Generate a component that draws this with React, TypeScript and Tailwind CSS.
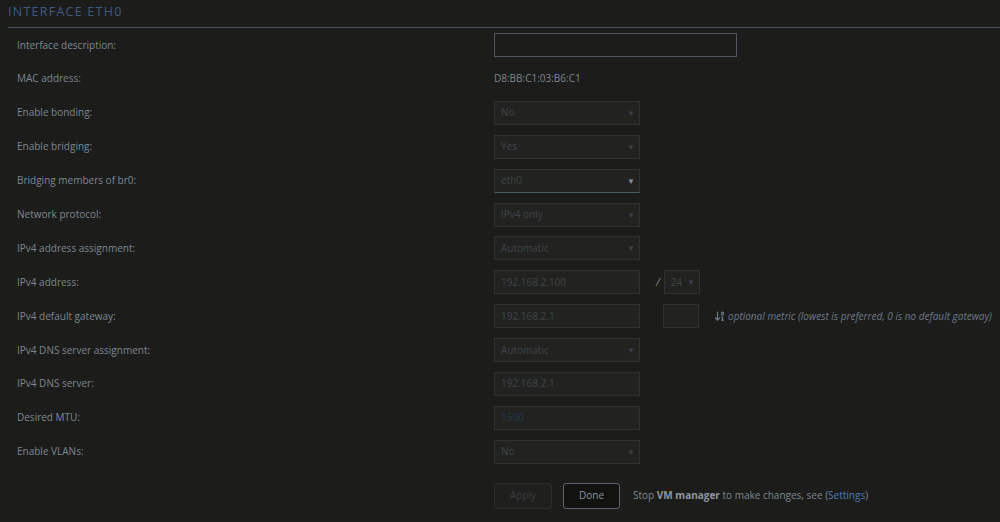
import { ArrowDown01 } from 'lucide-react';

const font = { fontFamily: '"Open Sans", "Noto Sans", sans-serif' };

function Caret({ bright = false }: { bright?: boolean }) {
  return (
    <span className={`text-[8px] leading-none ${bright ? 'text-[#8a929c]' : 'text-[#3c4046]'}`}>▼</span>
  );
}

function Select({ value, bright = false, w = 'w-[146px]' }: { value: string; bright?: boolean; w?: string }) {
  return (
    <div
      className={`${w} h-[24px] flex items-center justify-between pl-[6px] pr-[4px] bg-[#222321] border border-[#30322f] ${
        bright ? 'border-b-[#4a5868]' : ''
      }`}
    >
      <span className="text-[10px] text-[#3f4347]">{value}</span>
      <Caret bright={bright} />
    </div>
  );
}

function TextBox({ value = '', color = 'text-[#3f4347]', w = 'w-[146px]' }: { value?: string; color?: string; w?: string }) {
  return (
    <div className={`${w} h-[24px] flex items-center pl-[6px] bg-[#222321] border border-[#30322f]`}>
      <span className={`text-[10px] ${color}`}>{value}</span>
    </div>
  );
}

function Row({ label, children }: { label: string; children: React.ReactNode }) {
  return (
    <div className="flex items-center h-[33.9px]">
      <div className="w-[494px] pl-[17px] text-[10px] text-[#7d858e]">{label}</div>
      <div className="flex items-center">{children}</div>
    </div>
  );
}

export default function App() {
  return (
    <div className="w-[1000px] h-[522px] bg-[#1c1d1b] overflow-hidden" style={font}>
      <div className="ml-[8px] pt-[3px] h-[28px] text-[12.5px] tracking-[0.1em] text-[#3d5a7e] border-b border-[#4a5360]">
        INTERFACE ETH0
      </div>
      <div>
        <div className="flex items-center h-[34px]">
          <div className="w-[494px] pl-[17px] text-[10px] text-[#7d858e]">Interface description:</div>
          <div className="w-[243px] h-[24px] border border-[#4e5660] bg-[#1c1d1b]" />
        </div>
        <Row label="MAC address:">
          <span className="text-[10px] text-[#7d858e]">D8:BB:C1:03:B6:C1</span>
        </Row>
        <Row label="Enable bonding:">
          <Select value="No" />
        </Row>
        <Row label="Enable bridging:">
          <Select value="Yes" />
        </Row>
        <Row label="Bridging members of br0:">
          <Select value="eth0" bright />
        </Row>
        <Row label="Network protocol:">
          <Select value="IPv4 only" />
        </Row>
        <Row label="IPv4 address assignment:">
          <Select value="Automatic" />
        </Row>
        <Row label="IPv4 address:">
          <TextBox value="192.168.2.100" />
          <span className="ml-[16px] mr-[4px] text-[11px] italic text-[#7d858e]">/</span>
          <Select value="24" w="w-[36px]" />
        </Row>
        <Row label="IPv4 default gateway:">
          <TextBox value="192.168.2.1" />
          <div className="ml-[23px]">
            <TextBox w="w-[36px]" />
          </div>
          <ArrowDown01 className="ml-[15px] w-[12px] h-[12px] text-[#6c7684]" strokeWidth={2.5} />
          <span className="ml-[2px] text-[10px] italic text-[#6c7684]">
            optional metric (lowest is preferred, 0 is no default gateway)
          </span>
        </Row>
        <Row label="IPv4 DNS server assignment:">
          <Select value="Automatic" />
        </Row>
        <Row label="IPv4 DNS server:">
          <TextBox value="192.168.2.1" />
        </Row>
        <Row label="Desired MTU:">
          <TextBox value="1500" color="text-[#243850]" />
        </Row>
        <Row label="Enable VLANs:">
          <Select value="No" />
        </Row>
        <div className="flex items-center pl-[494px] mt-[14px] gap-[11px]">
          <div className="w-[58px] h-[26px] flex items-center justify-center rounded-[3px] border border-[#2c2e2c] bg-[#1f201e] text-[10px] text-[#3a3d40]">
            Apply
          </div>
          <div className="w-[57px] h-[26px] flex items-center justify-center rounded-[3px] border border-[#5a6270] bg-[#121311] text-[10px] text-[#8a929c]">
            Done
          </div>
          <span className="ml-[2px] text-[10px] text-[#7d858e]">
            Stop <b className="font-bold text-[#8e969f]">VM manager</b> to make changes, see (
            <span className="text-[#4f78b8]">Settings</span>)
          </span>
        </div>
      </div>
    </div>
  );
}
